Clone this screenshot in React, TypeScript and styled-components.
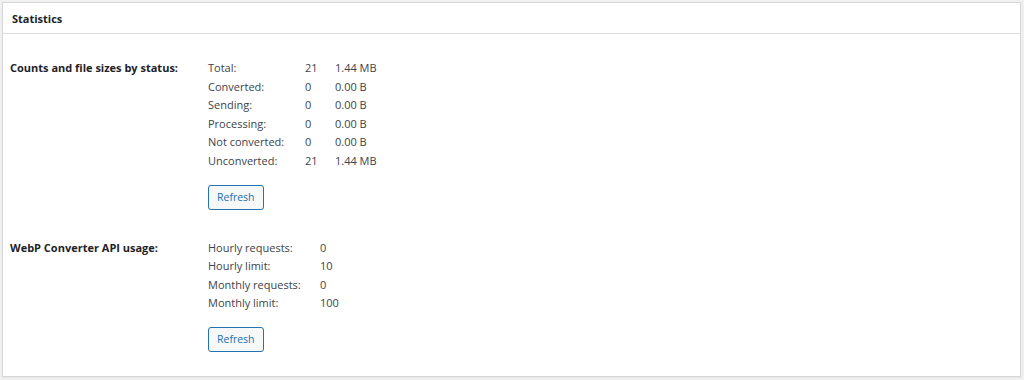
import { Fragment } from "react";
import styled, { createGlobalStyle } from "styled-components";

const GlobalStyle = createGlobalStyle`
  html, body {
    margin: 0;
    padding: 0;
    background: #f0f0f1;
  }
  body {
    font-family: "Open Sans", "Noto Sans", "Liberation Sans", sans-serif;
    font-size: 11px;
    color: #3c434a;
  }
  #root {
    padding: 2px 3px 3px 2px;
  }
`;

const Postbox = styled.div`
  background: #fff;
  border: 1px solid #d6d6d8;
  box-shadow: 0 1px 1px rgba(0, 0, 0, 0.04);
  height: 375px;
  box-sizing: border-box;
`;

const Header = styled.div`
  height: 30px;
  display: flex;
  align-items: center;
  padding-left: 9px;
  border-bottom: 1px solid #dcdcde;
  font-weight: 700;
  font-size: 11px;
  color: #1d2327;
`;

const Body = styled.div`
  padding: 25px 0 0 7px;
`;

const Section = styled.div<{ $gap?: number }>`
  display: flex;
  margin-bottom: ${({ $gap }) => $gap ?? 0}px;
`;

const Label = styled.div`
  width: 198px;
  flex-shrink: 0;
  font-weight: 700;
  color: #1d2327;
  line-height: 18.6px;
`;

const Content = styled.div`
  display: flex;
  flex-direction: column;
  align-items: flex-start;
`;

const Grid = styled.div<{ $cols: string }>`
  display: grid;
  grid-template-columns: ${({ $cols }) => $cols};
  line-height: 18.6px;
  margin-bottom: 14px;
`;

const Button = styled.button`
  font-family: inherit;
  font-size: 10.5px;
  color: #2271b1;
  background: #f6f7f7;
  border: 1px solid #2271b1;
  border-radius: 3px;
  height: 25px;
  padding: 0 8px;
  cursor: pointer;
`;

const statusRows = [
  ["Total:", "21", "1.44 MB"],
  ["Converted:", "0", "0.00 B"],
  ["Sending:", "0", "0.00 B"],
  ["Processing:", "0", "0.00 B"],
  ["Not converted:", "0", "0.00 B"],
  ["Unconverted:", "21", "1.44 MB"],
];

const apiRows = [
  ["Hourly requests:", "0"],
  ["Hourly limit:", "10"],
  ["Monthly requests:", "0"],
  ["Monthly limit:", "100"],
];

export default function App() {
  return (
    <>
      <GlobalStyle />
      <Postbox>
        <Header>Statistics</Header>
        <Body>
          <Section $gap={29}>
            <Label>Counts and file sizes by status:</Label>
            <Content>
              <Grid $cols="97px 30px auto">
                {statusRows.map((r) => (
                  <Fragment key={r[0]}>
                    <span>{r[0]}</span>
                    <span>{r[1]}</span>
                    <span>{r[2]}</span>
                  </Fragment>
                ))}
              </Grid>
              <Button>Refresh</Button>
            </Content>
          </Section>
          <Section>
            <Label>WebP Converter API usage:</Label>
            <Content>
              <Grid $cols="112px auto">
                {apiRows.map((r) => (
                  <Fragment key={r[0]}>
                    <span>{r[0]}</span>
                    <span>{r[1]}</span>
                  </Fragment>
                ))}
              </Grid>
              <Button>Refresh</Button>
            </Content>
          </Section>
        </Body>
      </Postbox>
    </>
  );
}
